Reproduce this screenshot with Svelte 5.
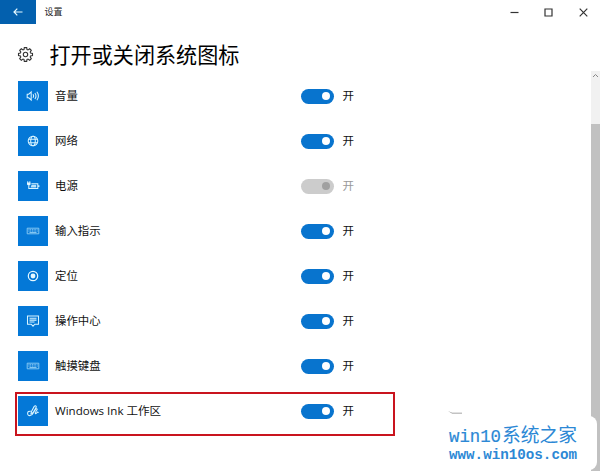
<script>
  const items = [
    { icon: 'volume', label: '音量' },
    { icon: 'globe', label: '网络' },
    { icon: 'power', label: '电源', disabled: true },
    { icon: 'keyboard', label: '输入指示' },
    { icon: 'location', label: '定位' },
    { icon: 'message', label: '操作中心' },
    { icon: 'keyboard', label: '触摸键盘' },
    { icon: 'ink', label: 'Windows Ink 工作区', marked: true }
  ];
</script>

<div class="window">
  <header>
    <div class="back">
      <svg width="10" height="8" viewBox="0 0 10 8"><path d="M9.5 4H1M4.3 .7 1 4l3.3 3.3" /></svg>
    </div>
    <span class="app">设置</span>
    <div class="controls">
      <svg width="9" height="9" viewBox="0 0 9 9"><path d="M.5 4.5h8" /></svg>
      <svg width="9" height="9" viewBox="0 0 9 9"><path d="M1 1h7v7H1z" /></svg>
      <svg width="9" height="9" viewBox="0 0 9 9"><path d="m.7.7 7.6 7.6M8.3.7.7 8.3" /></svg>
    </div>
  </header>

  <div class="content">
    <main>
      <div class="title">
        <svg class="gear" width="17" height="17" viewBox="0 0 17 17">
          <path d="m7.3 1.6 2.4 0 .3 1.9 1 .4 1.7-1.1 1.6 1.6-1.1 1.7.4 1 1.9.3v2.2l-1.9.3-.4 1 1.1 1.7-1.6 1.6-1.7-1.1-1 .4-.3 1.9H7.3L7 13.5l-1-.4-1.7 1.1-1.6-1.6 1.1-1.7-.4-1-1.9-.3V7.4l1.9-.3.4-1-1.1-1.7 1.6-1.6L6 3.9l1-.4z" />
          <circle cx="8.5" cy="8.5" r="2.2" />
        </svg>
        <h1>打开或关闭系统图标</h1>
      </div>
      <ul>
        {#each items as item}
          <li class:marked={item.marked}>
            <span class="tile">
              <svg width="14" height="14" viewBox="0 0 14 14">
                {#if item.icon === 'volume'}
                  <path class="bold" d="M1.2 5.2h1.5L5.2 3v8L2.7 8.8H1.2zM7 5.3q1.2 1.7 0 3.4M8.9 4q2.2 3 0 6M10.9 2.8q3 4.2 0 8.4" />
                {:else if item.icon === 'globe'}
                  <circle class="bold" cx="7" cy="7" r="4.8" />
                  <ellipse class="bold" cx="7" cy="7" rx="2.3" ry="4.8" />
                  <path class="bold" d="M2.7 5.2h8.6M2.7 8.8h8.6" />
                {:else if item.icon === 'power'}
                  <path class="solid" d="M1 3.4h3.6v2.2L3.4 6.6H2.2L1 5.6zM1.3 2.2h.9v1.2h-.9zM3.4 2.2h.9v1.2h-.9z" />
                  <path class="bold" d="M2.8 6.5v3h9V4.7H5.4M12.9 6.2v1.8" />
                  <path class="fillin" d="M5.6 5.8h4.6v2.6H4.6z" />
                {:else if item.icon === 'keyboard'}
                  <path class="keys" d="M1.2 4.2h11.6v5.6H1.2z" />
                  <path class="dots" d="M2.5 5.7h9M2.5 7.1h9" />
                  <path class="keys" d="M3.5 8.5h7" />
                {:else if item.icon === 'location'}
                  <circle cx="7" cy="7" r="4.7" class="ring" />
                  <circle cx="7" cy="7" r="2.4" class="solid" />
                {:else if item.icon === 'message'}
                  <path class="bold" d="M1.5 2h11v8.2H8.8L7 12.2 5.2 10.2H1.5zM3.5 4.2h7M3.5 6.1h7M3.5 8h5" />
                {:else}
                  <path class="bold" d="M5 9.6 5.5 7.4 8.2 2.4q.9-1 1.7-.4.7.5.2 1.6L7.2 8.5zM4.8 7.2Q1.8 6.9 1.6 9.2q0 2.6 2.6 2.4 2-.3 3-2.6L9.6 5.2q1.4-1.1 1.6.2L9.3 8.6q-.3 1.5 1 .8l.9-1.1q1-.5 1.2.6" />
                {/if}
              </svg>
            </span>
            <span class="label">{item.label}</span>
            <span class="toggle" class:disabled={item.disabled}><i></i></span>
            <span class="state" class:disabled={item.disabled}>开</span>
          </li>
        {/each}
      </ul>
    </main>
    <aside>
      <svg width="7" height="5" viewBox="0 0 7 5"><path d="m1 4 2.5-2.5L6 4" /></svg>
      <div class="thumb"></div>
    </aside>
  </div>

  <div class="watermark">
    <svg width="157" height="54" viewBox="0 0 157 54">
      <text x="9" y="25.5" font-size="19" textLength="52" lengthAdjust="spacingAndGlyphs">win10</text>
      <text class="url" x="9" y="43" font-size="14" textLength="128" lengthAdjust="spacingAndGlyphs">www.win10os.com</text>
      <text class="han" x="62" y="25.5" font-size="19" textLength="75" lengthAdjust="spacingAndGlyphs">系统之家</text>
    </svg>
  </div>
  <svg class="nib" width="15" height="4" viewBox="0 0 15 4"><path d="M0 0 4 1.8h10v.8H4z" /></svg>
</div>

<style>
  :global(body) { margin: 0; background: #fff; }
  .window {
    position: relative; width: 600px; height: 471px; overflow: hidden;
    display: flex; flex-direction: column; background: #fff; color: #111;
    font-family: "Open Sans", "Noto Sans CJK SC", sans-serif;
  }
  svg { display: block; fill: none; }
  header { display: flex; height: 24px; flex: none; align-items: center; }
  .back { width: 35.5px; height: 24px; display: flex; align-items: center; justify-content: center; background: #0360ae; }
  .back svg { stroke: #e8faff; stroke-width: 1.2; }
  .app { margin-left: 9px; font-size: 9px; line-height: 24px; color: #222; }
  .controls { display: flex; gap: 25.5px; margin-left: auto; padding-right: 12.5px; }
  .controls svg { stroke: #333; stroke-width: 1.2; }
  .content { flex: 1; display: flex; min-height: 0; }
  main { flex: 1; }
  .title { display: flex; align-items: center; height: 49.5px; padding: 12px 0 0 17px; box-sizing: border-box; }
  .title svg { stroke: #333; stroke-width: 1.1; margin-bottom: 1px; }
  h1 { margin: 0 0 0 15.5px; font-size: 21.1px; line-height: 30px; font-weight: 400; color: #000; white-space: nowrap; }
  ul { list-style: none; margin: 0; padding: 0 0 0 15px; }
  li { display: flex; align-items: center; width: 380px; height: 45px; padding-left: 3px; box-sizing: border-box; }
  li.marked { outline: 2px solid #c9141e; outline-offset: -2px; height: 44px; padding-bottom: 5px; margin-top: 3px; }
  .tile { width: 29.5px; height: 29.5px; flex: none; display: flex; align-items: center; justify-content: center; background: #0478d7; }
  .tile svg { stroke: #cdefff; stroke-width: .9; }
  .tile .bold { stroke-width: 1.05; stroke: #d8f4ff; }
  .tile .ring { stroke-width: 1.2; stroke: #e6f8ff; }
  .tile .solid { fill: #e6f8ff; stroke: none; }
  .tile .fillin { fill: #b9e3fb; stroke: none; }
  .tile .keys { stroke: #91cff5; }
  .tile .dots { stroke: #a9dafa; stroke-dasharray: 1 .7; }
  .label { width: 246px; margin-left: 7.5px; font-size: 11.4px; line-height: 20px; white-space: nowrap; }
  .marked .label { font-size: 11.55px; }
  .toggle { width: 33px; height: 15px; border-radius: 8px; flex: none; display: flex; align-items: center; justify-content: flex-end; padding-right: 4px; box-sizing: border-box; background: #0874ce; }
  .toggle i { width: 8px; height: 8px; border-radius: 50%; background: #fff; }
  .toggle.disabled { background: #ccc; }
  .toggle.disabled i { background: #a0a0a0; }
  .state { margin-left: 8.5px; font-size: 11.5px; line-height: 20px; }
  .state.disabled { color: #999; }
  aside { width: 9px; margin-top: 47px; flex: none; background: #f1f1f1; display: flex; flex-direction: column; }
  aside svg { margin: 2px 0 0 1px; stroke: #888; }
  .thumb { margin-top: 46px; flex: 1; background: #c1c1c1; }
  .watermark { position: absolute; left: 440px; top: 416px; width: 157px; height: 54px; border-radius: 8px; background: #fff; }
  .watermark text { fill: #2c88d5; font-family: "Liberation Mono", monospace; stroke: #2c88d5; stroke-width: .2; }
  .watermark .han { font-family: "Noto Sans CJK SC", sans-serif; stroke: none; }
  .watermark .url { font-weight: 700; stroke: none; }
  .nib { position: absolute; left: 448px; top: 411px; fill: #888; }
</style>
